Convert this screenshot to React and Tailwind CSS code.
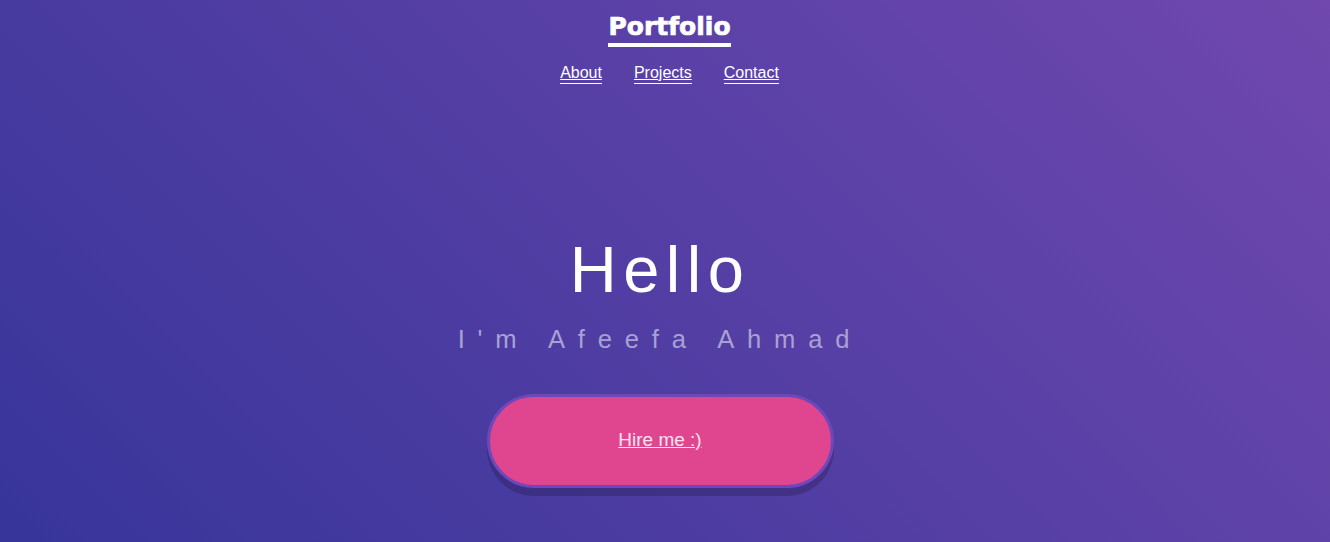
export default function App() {
  return (
    <div
      className="min-h-screen w-full overflow-hidden bg-[linear-gradient(45deg,#37359a,#7048ae)] text-white"
      style={{ fontFamily: '"Liberation Sans", Arial, sans-serif' }}
    >
      <header className="flex flex-col items-center pl-[9px]">
        <h1
          className="mt-[12px] border-b-4 border-white pb-[1px] text-[25px] font-bold leading-[30px] [-webkit-text-stroke:0.7px_white]"
          style={{ fontFamily: '"DejaVu Sans", sans-serif' }}
        >
          Portfolio
        </h1>
        <nav className="mt-[16px] flex gap-8 text-[16px] leading-[20px]">
          <a href="#about" className="border-b border-white underline">About</a>
          <a href="#projects" className="border-b border-white underline">Projects</a>
          <a href="#contact" className="border-b border-white underline">Contact</a>
        </nav>
      </header>
      <main className="flex flex-col items-center pr-[10px]">
        <h2 className="mt-[153px] text-[65px] font-light leading-[65px] tracking-[0.1em]">Hello</h2>
        <p className="mt-[25px] text-[25.6px] leading-[25.6px] tracking-[0.5em] text-[#a9a1d4]">
          I'm Afeefa Ahmad
        </p>
        <button className="mt-[41px] flex h-[94px] w-[347px] items-center justify-center rounded-full border-[3px] border-[#6d48ba] bg-[#e0468f] shadow-[0_8px_0_rgba(0,0,0,0.18)]">
          <span className="text-[19px] text-[#fde2ef] underline">Hire me :)</span>
        </button>
      </main>
    </div>
  );
}
